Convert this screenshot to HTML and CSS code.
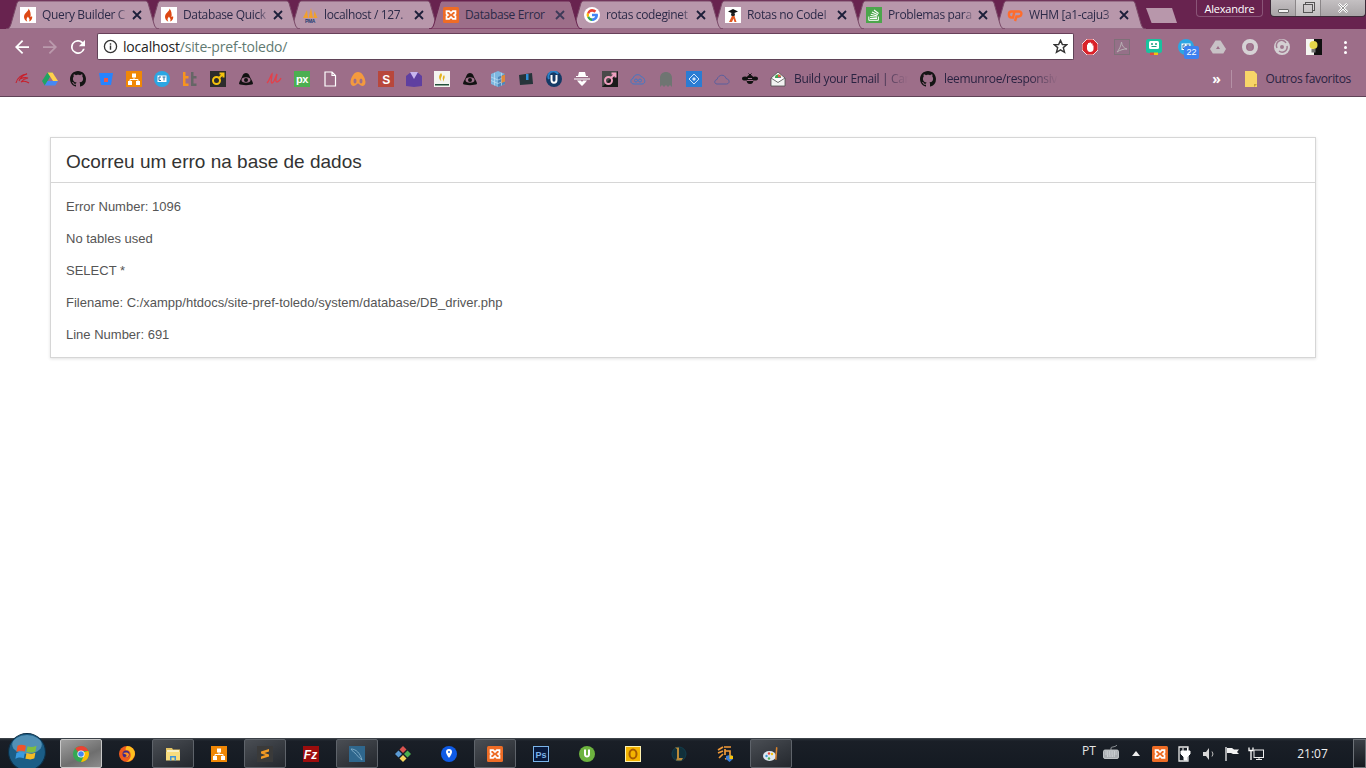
FILE: index.html
```html
<!DOCTYPE html>
<html lang="pt">
<head>
<meta charset="utf-8">
<title>Database Error</title>
<link rel="stylesheet" href="styles.css">
</head>
<body>
<svg class="defs" aria-hidden="true">
  <symbol id="tabshape" viewBox="0 0 153 29" preserveAspectRatio="none"><path d="M0 29C3 29 4 27 5 24L11 3C12 1 13 1 15 1H138C140 1 141 1 142 3L148 24C149 27 150 29 153 29Z"/></symbol>
  <symbol id="close" viewBox="0 0 12 12"><path d="M2 2L10 10M10 2L2 10" fill="none" stroke="currentColor" stroke-width="1.8"/></symbol>
  <symbol id="ci" viewBox="0 0 16 16"><rect width="16" height="16" fill="#fff"/><path d="M8.400 1.500C9 4 5 5.500 4.200 8.500 3.400 11.500 5.500 14 7.300 14.500 5.800 12.500 6.800 11 8 9.500 8.300 11 10.700 11.800 9 14.500 11.500 13.800 12.800 11.500 12 8.800 11.500 10 10.800 10.300 10.500 10 11 7 10.500 3.500 8.400 1.500Z" fill="#dd4814"/></symbol>
  <symbol id="xampp" viewBox="0 0 16 16"><rect width="16" height="16" rx="1.500" fill="#ee6c25"/><path d="M3.500 4.200H6.200L8 6 9.800 4.200H12.500V6.800L11 8 12.500 9.200V11.800H9.800L8 10 6.200 11.800H3.500V9.200L5 8 3.500 6.800Z" fill="none" stroke="#fff" stroke-width="1.700"/></symbol>
  <symbol id="google" viewBox="0 0 16 16"><circle cx="8" cy="8" r="8" fill="#fff"/><path d="M13.600 6.800H8V9.200H11.200C10.800 10.500 9.500 11.300 8 11.300V14C11.500 14 14 11.500 14 8 14 7.600 13.700 7.200 13.600 6.800Z" fill="#4285f4"/><path d="M3.200 10.200C4.200 12.500 6 14 8 14V11.300C6.800 11.300 5.500 10.500 5.100 9Z" fill="#34a853"/><path d="M3.200 5.800C2.400 7.200 2.400 8.800 3.200 10.200L5.100 9C4.800 8.300 4.800 7.700 5.100 7Z" fill="#fbbc05"/><path d="M3.200 5.800L5.100 7C5.700 5.500 6.800 4.700 8 4.700 9 4.700 9.800 5.100 10.400 5.700L12.300 3.800C11.200 2.700 9.700 2 8 2 6 2 4.200 3.500 3.200 5.800Z" fill="#ea4335"/></symbol>
  <symbol id="rotas" viewBox="0 0 16 16"><rect width="16" height="16" fill="#fff"/><path d="M3 4.500L8 2 13 4.500 8 6.500Z" fill="#111"/><circle cx="8" cy="7.500" r="2" fill="#222"/><path d="M7 9H9.500L11.500 15H9.500L8.500 11.500 7 15H4Z" fill="#e25822"/></symbol>
  <symbol id="so" viewBox="0 0 16 16"><rect width="16" height="16" fill="#4ca64c"/><path d="M4 11.500H11M4.200 9.500L11 10.200M4.800 7.200L11.300 9M6 5L11.800 7.800M8 3L12.600 6.500" stroke="#fff" stroke-width="1.100" fill="none"/><path d="M2.800 9.500V13.300H12.400V9.500" stroke="#fff" fill="none"/></symbol>
  <symbol id="cpanel" viewBox="0 0 16 16"><path d="M7.500 4.500H4.500C1 4.500 1 10.500 4.500 10.500H6L7.500 4.500H12C15.500 4.500 15 9.500 11.500 9.500H9.500L8 14" fill="none" stroke="#ff6c2c" stroke-width="2.400"/></symbol>

  <symbol id="github" viewBox="0 0 16 16"><path d="M8 0C3.580 0 0 3.580 0 8c0 3.540 2.290 6.530 5.470 7.590.4.070.55-.17.55-.38 0-.19-.01-.82-.01-1.490-2.010.37-2.530-.49-2.690-.94-.09-.23-.48-.94-.82-1.130-.28-.15-.68-.52-.01-.53.63-.01 1.080.58 1.230.82.72 1.210 1.870.87 2.330.66.07-.52.28-.87.51-1.070-1.780-.2-3.640-.89-3.640-3.950 0-.87.31-1.590.82-2.150-.08-.2-.36-1.020.08-2.120 0 0 .67-.21 2.200.82.64-.18 1.320-.27 2-.27.68 0 1.360.09 2 .27 1.530-1.040 2.200-.82 2.200-.82.44 1.100.16 1.920.08 2.120.51.56.82 1.270.82 2.150 0 3.070-1.870 3.750-3.650 3.950.29.25.54.73.54 1.480 0 1.070-.01 1.930-.01 2.200 0 .21.15.46.55.38A8.013 8.013 0 0016 8c0-4.420-3.580-8-8-8z" fill="#141414"/></symbol>
  <symbol id="swirl" viewBox="0 0 16 16"><path d="M2 12C3 7 8 3 13 3 9 4 6 7 5 10M6 8C8 7 11 6 14 7 11 7.500 8.500 9 7 11 9 10 12 10 15 12" fill="none" stroke="#c8202c" stroke-width="1.100"/></symbol>
  <symbol id="drive" viewBox="0 0 16 16"><path d="M5.500 1.500H10.500L5.300 10.500 2.800 14.500 0 10Z" fill="#1fa463"/><path d="M5.500 1.500H10.500L16 10H11Z" fill="#ffd04b"/><path d="M2.800 14.500L5.500 10H16L13.300 14.500Z" fill="#4688f4"/></symbol>
  <symbol id="bitbucket" viewBox="0 0 16 16"><path d="M1 2H15L13 14H3Z" fill="#2684ff"/><rect x="6" y="7" width="4" height="4" fill="#e8584f"/></symbol>
  <symbol id="tree" viewBox="0 0 16 16"><rect width="16" height="16" fill="#f08705"/><path d="M6 2.500H10V6.500H6ZM2 10H6V14H2ZM10 10H14V14H10Z" fill="#fff"/><path d="M8 6.500V8.500M4 10V8.500H12V10" stroke="#fff" fill="none"/></symbol>
  <symbol id="ct" viewBox="0 0 16 16"><circle cx="8" cy="8" r="8" fill="#2ba6e3"/><rect x="3.500" y="4.500" width="9" height="6.500" fill="#fff"/><path d="M5 6H7M5 6V9.500H7M8.500 6H11.500M10 6V9.500" stroke="#2b6fa3" fill="none"/></symbol>
  <symbol id="tt" viewBox="0 0 16 16"><path d="M1 1H3.500V5H6.500V7.500H3.500V12.500H6.500V15H1Z" fill="#f7941e"/><path d="M9 1H11.500V5H14.500V7.500H11.500V12.500H14.500V15H9Z" fill="#666"/></symbol>
  <symbol id="male" viewBox="0 0 16 16"><rect width="16" height="16" fill="#2c2c2c"/><circle cx="6.500" cy="9.500" r="3.500" fill="none" stroke="#f4c20d" stroke-width="2"/><path d="M9 7L13 3M9.500 2.500H13.500V6.500" fill="none" stroke="#f4c20d" stroke-width="2"/></symbol>
  <symbol id="male2" viewBox="0 0 16 16"><rect width="16" height="16" fill="#4a4a4a"/><path d="M16 0V16H0Z" fill="#1a1a1a"/><circle cx="6.500" cy="9.500" r="3.500" fill="none" stroke="#f0a0c0" stroke-width="2"/><path d="M9 7L13 3M9.500 2.500H13.500V6.500" fill="none" stroke="#f0a0c0" stroke-width="2"/></symbol>
  <symbol id="eye" viewBox="0 0 16 16"><path d="M8 2C5 2 4.500 5 3.500 7 2.500 9 1 11 1 13 3 14.500 13 14.500 15 13 15 11 13.500 9 12.500 7 11.500 5 11 2 8 2Z" fill="#111"/><ellipse cx="8" cy="9" rx="4.500" ry="2.800" fill="#9d6e89"/><circle cx="8" cy="9" r="2" fill="#111"/></symbol>
  <symbol id="script" viewBox="0 0 16 16"><path d="M1 12C3 10 5 4 6 3 6 7 4 11 6 12 8 12 10 5 11 3 10 7 9 11 11 11 12.500 11 14 9 15 7" fill="none" stroke="#e2414b" stroke-width="1.400"/></symbol>
  <symbol id="doc" viewBox="0 0 16 16"><path d="M3 1H10L13.500 4.500V15H3Z M10 1V4.500H13.500" fill="none" stroke="#fff" stroke-width="1.200"/></symbol>
  <symbol id="lungs" viewBox="0 0 16 16"><path d="M8 1C4 1 1 6 0.500 11 0.500 16 5 15.500 6.500 13.500 7.500 12 8.500 12 9.500 13.500 11 15.500 15.500 16 15.500 11 15 6 12 1 8 1Z" fill="#f49a3e"/><ellipse cx="5" cy="10" rx="1.500" ry="2.500" fill="#9d6e89"/><ellipse cx="11" cy="10" rx="1.500" ry="2.500" fill="#9d6e89"/></symbol>
  <symbol id="gem" viewBox="0 0 16 16"><path d="M0 5L5 1H11L16 5V15L8 16 0 15Z" fill="#5f3fa0"/><path d="M4 1H12L8 8Z" fill="#c8b6ee"/></symbol>
  <symbol id="advent" viewBox="0 0 16 16"><rect width="16" height="16" fill="#f4f4f0"/><path d="M7 2C10 5 5 7 7.500 10 5 9 4 5 7 2ZM10 4C12 7 9 8 10 11 8.500 9 8 6 10 4Z" fill="#e3b21c"/><path d="M1 13H15V14.500H1Z" fill="#22513a"/></symbol>
  <symbol id="cube" viewBox="0 0 16 16"><path d="M8 0L15 3V13L8 16 1 13V3Z" fill="#7db7e0"/><path d="M8 6V16L15 13V3Z" fill="#4f86b9"/><path d="M1 6L8 9 15 6M1 9.500L8 12.500 15 9.500M4.500 1.800V14.500M11.500 1.800V14.500" stroke="#cfe6f7" stroke-width=".6" fill="none"/><path d="M11.500 5V12L15 10.500V3.500Z" fill="#e08a3a"/></symbol>
  <symbol id="box" viewBox="0 0 16 16"><path d="M1 4L14 2 15 13 2 14Z" fill="#26343a"/><rect x="8" y="3" width="2.500" height="6" fill="#2f8ed8"/></symbol>
  <symbol id="torrent2" viewBox="0 0 16 16"><circle cx="8" cy="8" r="8" fill="#143a66"/><path d="M3 8A5 5 0 0 1 12 3" fill="none" stroke="#2a82c9" stroke-width="2"/><path d="M5.500 4V9C5.500 12.500 10.500 12.500 10.500 9V4" fill="none" stroke="#fff" stroke-width="2"/></symbol>
  <symbol id="spy" viewBox="0 0 16 16"><path d="M5 1H11L12 5H14V6H2V5H4Z" fill="#fff"/><path d="M0 7.500H16V8.500H0Z" fill="#fff"/><path d="M3 9.500H7L8 11 9 9.500H13L11 12 8 15 5 12Z" fill="#fff"/></symbol>
  <symbol id="cloudinf" viewBox="0 0 16 16"><path d="M4 13C0 13 0 8 3 7.500 4 3 10 2.500 11.500 6 15 6 16.500 13 12 13Z" fill="none" stroke="#4078c8" stroke-width="1"/><circle cx="6" cy="9.500" r="1.500" fill="none" stroke="#4078c8"/><circle cx="10" cy="9.500" r="1.500" fill="none" stroke="#4078c8"/></symbol>
  <symbol id="ghost" viewBox="0 0 16 16"><path d="M2 16V7C2 -1 14 -1 14 7V16L12 14 10 16 8 14 6 16 4 14Z" fill="#6f7572"/></symbol>
  <symbol id="diamond" viewBox="0 0 16 16"><rect width="16" height="16" fill="#2b7cd3"/><path d="M8 3L13 8 8 13 3 8Z" fill="none" stroke="#cfe4fa"/><path d="M8 6L10 8 8 10 6 8Z" fill="#cfe4fa"/></symbol>
  <symbol id="cloud" viewBox="0 0 16 16"><path d="M3 13C0 13 0 9 3 8.500 4.500 3 11 3 12 7.500 16 8 16 13 12.500 13Z" fill="none" stroke="#5a5f9e"/></symbol>
  <symbol id="bee" viewBox="0 0 16 16"><ellipse cx="8" cy="8.500" rx="3.500" ry="4.500" fill="#111"/><path d="M4.500 7.500H11.500M4.500 9.500H11.500" stroke="#9d6e89"/><ellipse cx="3" cy="7.500" rx="3" ry="2" fill="#111"/><ellipse cx="13" cy="7.500" rx="3" ry="2" fill="#111"/><path d="M6.500 2.500L8 4 9.500 2.500" fill="none" stroke="#111"/></symbol>
  <symbol id="mail" viewBox="0 0 16 16"><path d="M1 7L8 1 15 7V15H1Z" fill="#f2f2f2" stroke="#4d4d4d" stroke-width=".8"/><circle cx="8" cy="6.500" r="3" fill="#3ea44f"/><path d="M8 6.500V3.500A3 3 0 0 1 11 6.500Z" fill="#e85d3f"/><path d="M8 6.500H11A3 3 0 0 1 8 9.500Z" fill="#3b7dd8"/><path d="M1 7L8 11.500 15 7" fill="#fff" stroke="#4d4d4d" stroke-width=".8"/></symbol>
  <symbol id="folder" viewBox="0 0 16 16"><path d="M2 0H11L14 3V16H2Z" fill="#f8d568"/><path d="M11 16V13H14Z" fill="#c9a235"/></symbol>

  <symbol id="adblock" viewBox="0 0 16 16"><path d="M5 0H11L16 5V11L11 16H5L0 11V5Z" fill="#d9222a" stroke="#fff" stroke-width=".8"/><path d="M5 10V5.500H6V4H7.500V3.500H9V4.500H10.500V6.500H11.500V10C11.500 12 10 13 8 13 6.500 13 5.500 12 5 10Z" fill="#fff"/></symbol>
  <symbol id="pdf" viewBox="0 0 16 16"><rect x=".5" y=".5" width="15" height="15" fill="#957088" stroke="#7e7078"/><path d="M3 13C5 11 7 7 7.500 3 8 7 10 9.500 13 10 10 9.800 6 11 3 13Z" fill="none" stroke="#b8b0b4"/></symbol>
  <symbol id="bot" viewBox="0 0 16 16"><rect width="16" height="14" rx="2.500" fill="#19c29f"/><rect x="3" y="2" width="10" height="8" rx="1.500" fill="#fff"/><circle cx="6" cy="5" r="1" fill="#19a085"/><circle cx="10" cy="5" r="1" fill="#19a085"/><path d="M5.500 7.500H10.500" stroke="#19a085"/><path d="M4 13.500H8V16H4Z" fill="#e04f3f"/><path d="M8 13.500H12V16H8Z" fill="#f4c20d"/></symbol>
  <symbol id="gdrive" viewBox="0 0 16 16"><path d="M5.500 1.500H10.500L16 10 13.300 14.500H2.800L0 10Z" fill="#c8c2c6"/><path d="M8 7L10 10H6Z" fill="#9d6e89"/></symbol>
  <symbol id="ring" viewBox="0 0 16 16"><circle cx="8" cy="8" r="6" fill="none" stroke="#d6d2d5" stroke-width="4"/><ellipse cx="8" cy="8" rx="2.300" ry="4" fill="#a07a90"/></symbol>
  <symbol id="swirlg" viewBox="0 0 16 16"><circle cx="8" cy="8" r="8" fill="#d4d0d3"/><path d="M3 9A5 5 0 0 1 12 4M13 7A5 5 0 0 1 5 12" fill="none" stroke="#a07a90" stroke-width="1.500"/><circle cx="8" cy="8" r="2" fill="#a07a90"/></symbol>
  <symbol id="bulb" viewBox="0 0 16 16"><rect width="8" height="16" fill="#f5f5f0"/><rect x="8" width="8" height="16" fill="#101010"/><circle cx="7.500" cy="6" r="4" fill="#e3d64a"/><rect x="5.500" y="10" width="4" height="3.500" fill="#777"/></symbol>

  <symbol id="chrome" viewBox="0 0 16 16"><circle cx="8" cy="8" r="8" fill="#34a853"/><path d="M8 0A8 8 0 0 1 15.400 5H8A3 3 0 0 0 5.400 6.500L2.200 2.500A8 8 0 0 1 8 0Z" fill="#ea4335"/><path d="M15.400 5A8 8 0 0 1 8 16L11 9.500 10.600 6Z" fill="#fbbc05"/><circle cx="8" cy="8" r="3.600" fill="#fff"/><circle cx="8" cy="8" r="2.800" fill="#4285f4"/></symbol>
  <symbol id="firefox" viewBox="0 0 16 16"><circle cx="8" cy="8" r="8" fill="#ee5a1e"/><path d="M8 0A8 8 0 0 1 16 8C15 13 11 16 7 16 11 14 13 10 11 6 10 4 8 4 7 4.500 6 3 7 1 8 0Z" fill="#ffc01f"/><circle cx="7" cy="8" r="3.500" fill="#3d2a8c"/><path d="M4 7C6 6 10 6 10 8.500 10 11 7.500 12 5.500 11 7.500 11 8 9.500 7 8.500 6 8 5 8 4 7Z" fill="#ff9020"/></symbol>
  <symbol id="explorer" viewBox="0 0 16 16"><path d="M1 2H7L8 3.500H15V14H1Z" fill="#e4c464"/><path d="M2 4H14V6H2Z" fill="#f6efc5"/><path d="M1 6H15V14.500H1Z" fill="#f7dc7e"/><path d="M5 14.500V10H11V14.500H9.500V11.500H6.500V14.500Z" fill="#3f93d6"/></symbol>
  <symbol id="sublime" viewBox="0 0 16 16"><rect width="16" height="16" fill="#3a3a3a"/><path d="M4 5.500L12 3V5.500L7.500 7L12 8.500V10.500L4 13V10.500L8.500 9L4 7.500Z" fill="#f29a24"/></symbol>
  <symbol id="mysql" viewBox="0 0 16 16"><rect width="16" height="16" fill="#2f678d"/><path d="M2 3C7 3 11 7 13 14 9 11 8 9 6 7 4 6 3 4 2 3Z" fill="none" stroke="#8db7d1" stroke-width=".8"/></symbol>
  <symbol id="git" viewBox="0 0 16 16"><path d="M8 0L11.500 3.500 8 7 4.500 3.500Z" fill="#d9534f"/><path d="M3.500 4.500L7 8 3.500 11.500 0 8Z" fill="#5b9bd5"/><path d="M12.500 4.500L16 8 12.500 11.500 9 8Z" fill="#4caf50"/><path d="M8 9L11.500 12.500 8 16 4.500 12.500Z" fill="#f6d55c"/></symbol>
  <symbol id="pin" viewBox="0 0 16 16"><circle cx="8" cy="8" r="8" fill="#0f5be6"/><path d="M8 3A3 3 0 0 0 5 6C5 8 8 12 8 12S11 8 11 6A3 3 0 0 0 8 3Z" fill="#fff"/><circle cx="8" cy="6" r="1" fill="#0f5be6"/></symbol>
  <symbol id="utorrent" viewBox="0 0 16 16"><circle cx="8" cy="8" r="8" fill="#6db33f"/><path d="M5 3.500V8.500C5 12.500 11 12.500 11 8.500V3.500H9V8.500C9 10 7 10 7 8.500V3.500Z" fill="#fff"/></symbol>
  <symbol id="outlook" viewBox="0 0 16 16"><rect x=".5" y=".5" width="15" height="15" fill="#f4b400" stroke="#fff2b0"/><ellipse cx="8" cy="8" rx="3.500" ry="4.500" fill="none" stroke="#a85c00" stroke-width="2"/></symbol>
  <symbol id="lol" viewBox="0 0 16 16"><circle cx="8" cy="8" r="7" fill="#11303a" stroke="#113d4d"/><path d="M4 1.500H8V12H12L10.500 14.500H5L6 12V3Z" fill="#b98a39"/></symbol>
  <symbol id="game" viewBox="0 0 16 16"><path d="M1 4L6 1M1 7L6 5M2 12L6 8M7 1H14M8 3V9M8 5H13V10M8 13L14 11" fill="none" stroke="#f29a38" stroke-width="1.700"/><path d="M9 10L12.500 9 16 10V13L12.500 16 9 13Z" fill="#3b7dd8"/><path d="M12.500 9L16 10V13H12.500Z" fill="#f4c20d"/></symbol>
  <symbol id="paint" viewBox="0 0 16 16"><ellipse cx="6.500" cy="10" rx="6.500" ry="5" fill="#dfe8f0"/><circle cx="3.500" cy="10" r="1.200" fill="#3b9dd8"/><circle cx="6" cy="7.500" r="1.200" fill="#e2473f"/><circle cx="9" cy="8" r="1.200" fill="#f4c20d"/><circle cx="6" cy="12.500" r="1.200" fill="#4caf50"/><path d="M13 1L14.500 1.500 13.500 14 12 13.500Z" fill="#d9822b"/></symbol>

  <symbol id="plug" viewBox="0 0 16 16"><path d="M3 1H12V15H3Z" fill="none" stroke="#e8e8e8" stroke-width="1.300"/><path d="M5 5H14V8L11 11V14H8V11L5 8Z M7 2V5M11.500 2V5" fill="#fff" stroke="#fff"/></symbol>
  <symbol id="vol" viewBox="0 0 16 16"><path d="M3 6H6L9 2V14L6 10H3Z" fill="#d8d8d8"/><path d="M12 5.500A4 4 0 0 1 12 10.500" fill="none" stroke="#c0c0c0"/></symbol>
  <symbol id="flag" viewBox="0 0 16 16"><path d="M2 1V15" stroke="#fff" stroke-width="1.200"/><path d="M3 2H8L10 3.500H15L13 6 15 8H9L7 7H3Z" fill="#f2f2f2"/></symbol>
  <symbol id="net" viewBox="0 0 16 16"><rect x="6" y="4" width="9.500" height="7.500" fill="none" stroke="#eee"/><path d="M8 13.500H14M11 11.500V13.500" stroke="#eee"/><path d="M1 1.500V4.500H5V1.500M3 4.500V14" fill="none" stroke="#fff" stroke-width="1.300"/></symbol>
  <symbol id="kbd" viewBox="0 0 16 16"><rect x=".5" y="6" width="15" height="8.500" rx="1.500" fill="#a9adb1" stroke="#d8dadc" stroke-width=".8"/><path d="M2.500 8H13.500M2.500 10H13.500M4 12H12" stroke="#eceff1" stroke-dasharray="1 .7"/><path d="M8 6V4C8 2.500 12 3.500 14 1" fill="none" stroke="#9a9ea2"/></symbol>
</svg>

<div class="screen">
  <header class="browser">
    <div class="tabstrip">
      <div class="tabs">
        <div class="tab"><svg class="tab-bg"><use href="#tabshape"/></svg><svg class="ico"><use href="#ci"/></svg><span class="tab-title">Query Builder C</span><svg class="tab-close"><use href="#close"/></svg></div>
        <div class="tab"><svg class="tab-bg"><use href="#tabshape"/></svg><svg class="ico"><use href="#ci"/></svg><span class="tab-title">Database Quick</span><svg class="tab-close"><use href="#close"/></svg></div>
        <div class="tab"><svg class="tab-bg"><use href="#tabshape"/></svg><svg class="ico" viewBox="0 0 16 16"><path d="M1 11L5 3 6 11ZM6.500 11L9 1 11 11ZM11.500 11L12.500 4 15.500 11Z" fill="#f0a030"/><text x="8" y="15.500" text-anchor="middle" class="svgt" font-size="5" fill="#1c3f73">PMA</text></svg><span class="tab-title">localhost / 127.</span><svg class="tab-close"><use href="#close"/></svg></div>
        <div class="tab active"><svg class="tab-bg"><use href="#tabshape"/></svg><svg class="ico"><use href="#xampp"/></svg><span class="tab-title">Database Error</span><svg class="tab-close"><use href="#close"/></svg></div>
        <div class="tab"><svg class="tab-bg"><use href="#tabshape"/></svg><svg class="ico"><use href="#google"/></svg><span class="tab-title">rotas codeginet</span><svg class="tab-close"><use href="#close"/></svg></div>
        <div class="tab"><svg class="tab-bg"><use href="#tabshape"/></svg><svg class="ico"><use href="#rotas"/></svg><span class="tab-title">Rotas no CodeI</span><svg class="tab-close"><use href="#close"/></svg></div>
        <div class="tab"><svg class="tab-bg"><use href="#tabshape"/></svg><svg class="ico"><use href="#so"/></svg><span class="tab-title">Problemas para</span><svg class="tab-close"><use href="#close"/></svg></div>
        <div class="tab"><svg class="tab-bg"><use href="#tabshape"/></svg><svg class="ico"><use href="#cpanel"/></svg><span class="tab-title">WHM [a1-caju3</span><svg class="tab-close"><use href="#close"/></svg></div>
      </div>
      <div class="newtab"></div>
      <div class="profile">Alexandre</div>
      <div class="winctl">
        <div class="wbtn wmin"><span class="wmin-bar"></span></div>
        <div class="wbtn wmax"><span class="wmax-box"></span></div>
        <div class="wbtn wclose">
          <svg class="wclose-x" viewBox="0 0 14 12"><path d="M2 1L12 11M12 1L2 11" stroke="#fff" stroke-width="3"/><path d="M2 1L12 11M12 1L2 11" stroke="#7d7d7d" stroke-width="1"/></svg>
        </div>
      </div>
    </div>

    <div class="toolbar">
      <button class="navbtn"><svg class="ico nav-ico" viewBox="0 0 16 16"><path d="M16 7H3.830l5.590-5.590L8 0 0 8l8 8 1.410-1.410L3.830 9H16z" fill="#fff"/></svg></button>
      <button class="navbtn dim"><svg class="ico nav-ico" viewBox="0 0 16 16"><path d="M0 7h12.170L6.580 1.410 8 0l8 8-8 8-1.410-1.410L12.170 9H0z" fill="#fff"/></svg></button>
      <button class="navbtn"><svg class="ico nav-ico" viewBox="0 0 16 16"><path d="M13.650 2.350A8 8 0 1 0 15.730 10h-2.080A6 6 0 1 1 8 2c1.660 0 3.140.69 4.220 1.780L9 7h7V0z" fill="#fff"/></svg></button>
      <div class="omnibox">
        <svg class="ico omni-info" viewBox="0 0 16 16"><circle cx="8" cy="8" r="6.500" fill="none" stroke="#333" stroke-width="1.400"/><path d="M8 7V11.500M8 4.500V6" stroke="#333" stroke-width="1.500"/></svg>
        <span class="url"><span class="url-host">localhost</span>/site-pref-toledo/</span>
        <svg class="ico omni-star" viewBox="0 0 16 16"><path d="M8 1.500L10 6H14.800L11 9.200 12.300 14.200 8 11.500 3.700 14.200 5 9.200 1.200 6H6Z" fill="none" stroke="#333" stroke-width="1.500"/></svg>
      </div>
      <div class="extensions">
        <svg class="ico"><use href="#adblock"/></svg>
        <svg class="ico"><use href="#pdf"/></svg>
        <svg class="ico"><use href="#bot"/></svg>
        <span class="ext-badged"><svg class="ico"><use href="#ct"/></svg><span class="badge">22</span></span>
        <svg class="ico"><use href="#gdrive"/></svg>
        <svg class="ico"><use href="#ring"/></svg>
        <svg class="ico"><use href="#swirlg"/></svg>
        <svg class="ico"><use href="#bulb"/></svg>
        <span class="menu-dots"><i></i><i></i><i></i></span>
      </div>
    </div>

    <nav class="bookmarks">
      <svg class="ico"><use href="#swirl"/></svg>
      <svg class="ico"><use href="#drive"/></svg>
      <svg class="ico"><use href="#github"/></svg>
      <svg class="ico"><use href="#bitbucket"/></svg>
      <svg class="ico"><use href="#tree"/></svg>
      <svg class="ico"><use href="#ct"/></svg>
      <svg class="ico"><use href="#tt"/></svg>
      <svg class="ico"><use href="#male"/></svg>
      <svg class="ico"><use href="#eye"/></svg>
      <svg class="ico"><use href="#script"/></svg>
      <svg class="ico" viewBox="0 0 16 16"><rect width="16" height="16" fill="#4caf50"/><text x="8" y="12" text-anchor="middle" class="svgt" font-size="11" fill="#fff">px</text></svg>
      <svg class="ico"><use href="#doc"/></svg>
      <svg class="ico"><use href="#lungs"/></svg>
      <svg class="ico" viewBox="0 0 16 16"><rect width="16" height="16" fill="#b8473c"/><text x="8" y="12.500" text-anchor="middle" class="svgt" font-size="12" fill="#fff">S</text></svg>
      <svg class="ico"><use href="#gem"/></svg>
      <svg class="ico"><use href="#advent"/></svg>
      <svg class="ico"><use href="#eye"/></svg>
      <svg class="ico"><use href="#cube"/></svg>
      <svg class="ico"><use href="#box"/></svg>
      <svg class="ico"><use href="#torrent2"/></svg>
      <svg class="ico"><use href="#spy"/></svg>
      <svg class="ico"><use href="#male2"/></svg>
      <svg class="ico"><use href="#cloudinf"/></svg>
      <svg class="ico"><use href="#ghost"/></svg>
      <svg class="ico"><use href="#diamond"/></svg>
      <svg class="ico"><use href="#cloud"/></svg>
      <svg class="ico"><use href="#bee"/></svg>
      <span class="bm-item"><svg class="ico"><use href="#mail"/></svg><span class="bm-text">Build your Email | Car</span></span>
      <span class="bm-item"><svg class="ico"><use href="#github"/></svg><span class="bm-text">leemunroe/responsiv</span></span>
      <span class="bm-right">
        <span class="bm-more">»</span>
        <span class="bm-sep"></span>
        <svg class="ico bm-folder"><use href="#folder"/></svg>
        <span class="bm-other">Outros favoritos</span>
      </span>
    </nav>
  </header>

  <main class="page">
    <section class="card">
      <h1 class="card-title">Ocorreu um erro na base de dados</h1>
      <div class="card-body">
        <p>Error Number: 1096</p>
        <p>No tables used</p>
        <p>SELECT *</p>
        <p>Filename: C:/xampp/htdocs/site-pref-toledo/system/database/DB_driver.php</p>
        <p>Line Number: 691</p>
      </div>
    </section>
  </main>

  <footer class="taskbar">
    <div class="orb">
      <svg viewBox="0 0 36 36" class="orb-svg">
        <circle cx="18" cy="18" r="17.500" fill="#1b5d86" stroke="#0d2f47"/>
        <ellipse cx="18" cy="11" rx="14" ry="9" fill="#6aa7c9" opacity=".7"/>
        <path d="M9 12C12 10.500 14 11 17 12L16 17.500C13 16.500 11 16.500 8 18Z" fill="#f0542a"/>
        <path d="M18.500 12.500C21 13.500 24 13.500 27 12L26 17.500C23 19 21 18.500 17.500 18Z" fill="#7fbe3f"/>
        <path d="M8 19C11 17.500 13 18 16 18.500L15 24C12 23 10 23 7 24.500Z" fill="#3a9be0"/>
        <path d="M17.500 19C21 20 23 20 26 18.500L25 24C22 25.500 20 25 16.500 24.500Z" fill="#f5bb24"/>
      </svg>
    </div>
    <div class="apps">
      <div class="app on first"><svg class="ico"><use href="#chrome"/></svg></div>
      <div class="app"><svg class="ico"><use href="#firefox"/></svg></div>
      <div class="app on"><svg class="ico"><use href="#explorer"/></svg></div>
      <div class="app"><svg class="ico"><use href="#tree"/></svg></div>
      <div class="app on"><svg class="ico"><use href="#sublime"/></svg></div>
      <div class="app"><svg class="ico" viewBox="0 0 16 16"><rect width="16" height="16" fill="#9c0d0d"/><text x="7.500" y="12.500" text-anchor="middle" class="svgt svgi" font-size="12" fill="#fff">Fz</text></svg></div>
      <div class="app on"><svg class="ico"><use href="#mysql"/></svg></div>
      <div class="app"><svg class="ico"><use href="#git"/></svg></div>
      <div class="app"><svg class="ico"><use href="#pin"/></svg></div>
      <div class="app on"><svg class="ico"><use href="#xampp"/></svg></div>
      <div class="app"><svg class="ico" viewBox="0 0 16 16"><rect x=".5" y=".5" width="15" height="15" fill="#081a3e" stroke="#7ab4ea"/><text x="8" y="11.500" text-anchor="middle" class="svgt" font-size="9" fill="#7ab4ea">Ps</text></svg></div>
      <div class="app"><svg class="ico"><use href="#utorrent"/></svg></div>
      <div class="app"><svg class="ico"><use href="#outlook"/></svg></div>
      <div class="app"><svg class="ico"><use href="#lol"/></svg></div>
      <div class="app"><svg class="ico"><use href="#game"/></svg></div>
      <div class="app on"><svg class="ico"><use href="#paint"/></svg></div>
    </div>
    <div class="tray">
      <span class="tray-lang">PT</span>
      <svg class="ico tray-kbd"><use href="#kbd"/></svg>
      <span class="tray-item"><span class="tray-arrow"></span></span>
      <span class="tray-item"><svg class="ico"><use href="#xampp"/></svg></span>
      <span class="tray-item"><svg class="ico"><use href="#plug"/></svg></span>
      <span class="tray-item"><svg class="ico"><use href="#vol"/></svg></span>
      <span class="tray-item"><svg class="ico"><use href="#flag"/></svg></span>
      <span class="tray-item"><svg class="ico"><use href="#net"/></svg></span>
      <span class="clock">21:07</span>
      <span class="show-desktop"></span>
    </div>
  </footer>
</div>
</body>
</html>
```

FILE: styles.css
```css
* { box-sizing: border-box; }
html, body { margin: 0; padding: 0; height: 100%; background: #fff; overflow: hidden; }
.defs { position: absolute; width: 0; height: 0; overflow: hidden; }
.svgt { font-family: "Liberation Sans", sans-serif; font-weight: 700; }
.svgi { font-style: italic; }
.ico { width: 16px; height: 16px; flex: none; display: block; }

.screen { display: flex; flex-direction: column; height: 768px; width: 1366px; font-family: "Open Sans", sans-serif; }

.browser { flex: none; height: 97px; background: #9d6e89; border-bottom: 1px solid #5f4357; display: flex; flex-direction: column; }

.tabstrip { flex: none; height: 29px; background: #68234f; display: flex; align-items: flex-start; padding-left: 6px; position: relative; }
.tabs { display: flex; flex: none; }
.tab { position: relative; width: 153px; height: 29px; margin-right: -12px; padding: 0 16px 0 14px; display: flex; align-items: center; font-size: 12px; letter-spacing: -.35px; color: #2c2a48; }
.tab:nth-child(1) { z-index: 8; } .tab:nth-child(2) { z-index: 7; } .tab:nth-child(3) { z-index: 6; }
.tab:nth-child(5) { z-index: 5; } .tab:nth-child(6) { z-index: 4; } .tab:nth-child(7) { z-index: 3; } .tab:nth-child(8) { z-index: 2; }
.tab.active { z-index: 9; }
.tab-bg { position: absolute; left: 0; top: 0; width: 100%; height: 100%; fill: #b897ab; stroke: #7a4a68; }
.tab.active .tab-bg { fill: #9d6e89; stroke: #68234f; }
.tab > .ico { position: relative; margin-right: 6px; }
.tab-title { position: relative; flex: 1; min-width: 0; white-space: nowrap; overflow: hidden; line-height: 16px; -webkit-mask-image: linear-gradient(90deg, #000 84%, transparent 98%); mask-image: linear-gradient(90deg, #000 84%, transparent 98%); }
.tab.active .tab-title { -webkit-mask-image: none; mask-image: none; }
.tab-close { position: relative; width: 12px; height: 12px; flex: none; color: #1d1f3a; }
.tab.active .tab-close { color: #3d3a58; }

.newtab { width: 31px; height: 15px; margin: 8px 0 0 12px; background: #b897ab; clip-path: polygon(0 0, 84% 0, 100% 100%, 18% 100%); flex: none; }

.profile { margin-left: 19px; width: 67px; height: 17px; flex: none; background: #68234f; border: 1px solid #8a5578; border-top: 0; border-radius: 0 0 4px 4px; color: #fff; font-size: 11px; letter-spacing: -.2px; line-height: 18px; text-align: center; }
.winctl { margin-left: 7px; display: flex; height: 17px; flex: none; background: linear-gradient(#c4c0c2, #a8a4a6); border: 1px solid #3c2a38; border-top: 0; border-radius: 0 0 4px 4px; }
.wbtn { display: flex; align-items: center; justify-content: center; height: 100%; border-right: 1px solid #8a8688; }
.wmin { width: 25px; }
.wmin-bar { width: 11px; height: 4px; margin-top: 6px; background: #f4f4f4; border: 1px solid #666; border-radius: 1px; }
.wmax { width: 25px; background: linear-gradient(#d8d6d7, #c0bdbe); }
.wmax-box { width: 10px; height: 9px; border: 1px solid #555; box-shadow: 2px -2px 0 -1px #d8d6d7, 2px -2px 0 0 #555; }
.wclose { width: 44px; border-right: 0; }
.wclose-x { width: 12px; height: 10px; }

.toolbar { flex: none; height: 32px; padding-left: 8px; display: flex; align-items: center; }
.navbtn { width: 28px; height: 28px; padding: 0; margin: 3px 0 0; background: none; border: 0; display: flex; align-items: center; justify-content: center; flex: none; }
.navbtn.dim { opacity: .3; }
.nav-ico { width: 14px; height: 14px; }
.omnibox { width: 977px; height: 27px; margin: 3px 0 0 5px; background: #fff; border: 1px solid #5f4357; border-top-color: #68405a; border-radius: 2px; display: flex; align-items: center; padding: 0 5px 0 5px; flex: none; }
.omni-info { margin-right: 5px; width: 15px; height: 15px; }
.url { flex: 1; font-size: 14px; letter-spacing: -.2px; color: #5f7a72; white-space: nowrap; }
.url-host { color: #222; }
.omni-star { width: 15px; height: 15px; }
.extensions { margin: 4px 0 0 8px; display: flex; align-items: center; gap: 16px; flex: none; }
.ext-badged { position: relative; display: block; width: 16px; height: 16px; }
.badge { position: absolute; left: 6px; top: 7px; width: 15px; height: 13px; background: #3d82f0; color: #fff; font-size: 9px; line-height: 13px; text-align: center; border-radius: 2px; font-family: "Liberation Sans", sans-serif; }
.menu-dots { width: 4px; margin-left: 6px; display: flex; flex-direction: column; gap: 2px; }
.menu-dots i { display: block; width: 3px; height: 3px; background: #fff; border-radius: 50%; }

.bookmarks { flex: 1; padding: 0 15px 0 14px; display: flex; align-items: center; gap: 12px; font-size: 12px; letter-spacing: -.35px; color: #2a2342; }
.bm-item { display: flex; align-items: center; gap: 8px; width: 138px; flex: none; }
.bm-text { flex: 1; min-width: 0; white-space: nowrap; overflow: hidden; -webkit-mask-image: linear-gradient(90deg, #000 75%, transparent 100%); mask-image: linear-gradient(90deg, #000 75%, transparent 100%); }
.bm-right { margin-left: auto; display: flex; align-items: center; }
.bm-more { color: #fff; font-size: 14px; font-weight: 700; line-height: 14px; margin-right: 10px; }
.bm-sep { width: 1px; height: 18px; background: #b591a6; margin-right: 11px; }
.bm-folder { margin-right: 7px; }
.bm-other { white-space: nowrap; }

.page { flex: 1; min-height: 0; background: #fff; padding: 40px 50px 0; }
.card { border: 1px solid #d6d6d6; box-shadow: 0 1px 3px rgba(0,0,0,.12); background: #fff; font-family: "Liberation Sans", Arial, sans-serif; }
.card-title { margin: 0; padding: 0 15px; height: 45px; line-height: 47px; font-size: 19px; font-weight: 400; color: #333; border-bottom: 1px solid #d6d6d6; }
.card-body { padding: 14px 15px 12px; font-size: 13px; line-height: 20px; color: #555; }
.card-body p { margin: 0 0 12px; }
.card-body p:last-child { margin-bottom: 0; }

.taskbar { flex: none; height: 30px; display: flex; align-items: stretch; background: linear-gradient(#2a3038 0, #1a1f27 2px, #141a22 100%); border-top: 1px solid #3b4148; position: relative; color: #fff; }
.orb { flex: none; width: 38px; height: 38px; margin: -6px 0 0 8px; position: relative; z-index: 2; }
.orb-svg { display: block; width: 38px; height: 38px; }
.apps { display: flex; gap: 4px; margin-left: 14px; flex: none; }
.app { width: 42px; height: 29px; display: flex; align-items: center; justify-content: center; border: 1px solid transparent; border-radius: 2px; }
.app.on { border-color: #5e636a; background: linear-gradient(155deg, #4a4e54 0%, #34383e 55%, #24282e 100%); }
.app.first { border-color: #c8c8c8; background: linear-gradient(155deg, #a0a0a0 0%, #6e6e6e 60%, #8c8c8c 100%); }
.tray { margin-left: auto; display: flex; align-items: center; font-size: 12px; }
.tray-lang { width: 21px; margin-top: -6px; color: #e6e6e6; }
.tray-kbd { margin-right: 5px; margin-top: -4px; }
.tray-item { width: 24px; display: flex; justify-content: center; align-items: center; }
.tray-arrow { width: 0; height: 0; border: 4px solid transparent; border-top: 0; border-bottom: 5px solid #eee; }
.clock { width: 85px; padding-left: 4px; text-align: center; color: #f0f0f0; margin-top: -1px; }
.show-desktop { width: 13px; height: 29px; background: linear-gradient(#3a3f46, #15191f); border: 1px solid #6d7278; }
```
